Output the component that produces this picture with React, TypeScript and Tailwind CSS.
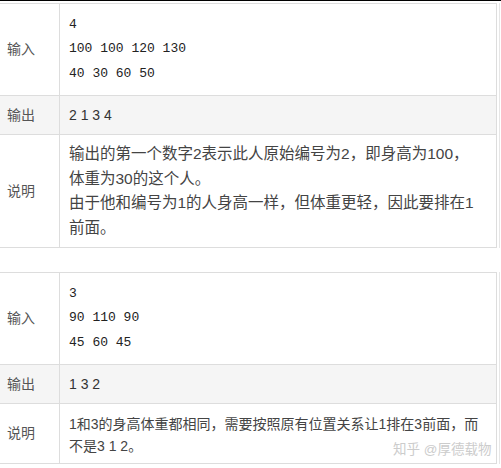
import React from 'react';

type Row = {
  label: string;
  kind: 'input' | 'output' | 'desc';
  lines: string[];
  h: string;
};

const tables: { rows: Row[]; descText: string }[] = [
  {
    descText: 'text-[15.5px] leading-[24.5px]',
    rows: [
      { label: '输入', kind: 'input', lines: ['4', '100 100 120 130', '40 30 60 50'], h: 'h-[92px]' },
      { label: '输出', kind: 'output', lines: ['2 1 3 4'], h: 'h-[39px]' },
      {
        label: '说明',
        kind: 'desc',
        lines: [
          '输出的第一个数字2表示此人原始编号为2，即身高为100，',
          '体重为30的这个人。',
          '由于他和编号为1的人身高一样，但体重更轻，因此要排在1',
          '前面。',
        ],
        h: 'h-[113px]',
      },
    ],
  },
  {
    descText: 'text-[14px] leading-[22px] pt-[2px]',
    rows: [
      { label: '输入', kind: 'input', lines: ['3', '90 110 90', '45 60 45'], h: 'h-[92px]' },
      { label: '输出', kind: 'output', lines: ['1 3 2'], h: 'h-[39px]' },
      {
        label: '说明',
        kind: 'desc',
        lines: ['1和3的身高体重都相同，需要按照原有位置关系让1排在3前面，而', '不是3 1 2。'],
        h: 'h-[60px]',
      },
    ],
  },
];

const sans = { fontFamily: '"Liberation Sans", "Noto Sans CJK SC", sans-serif' };
const mono = { fontFamily: '"Liberation Mono", "Noto Sans CJK SC", monospace' };

function Table({ rows, descText }: { rows: Row[]; descText: string }) {
  return (
    <div className="w-[500px] border-r border-[#e6e6e6]">
      <div className="w-[497px] border-t border-r border-[#dddddd]">
        {rows.map((r) => (
          <div
            key={r.label}
            className={`flex border-b border-[#dddddd] ${r.h} ${r.kind === 'output' ? 'bg-[#f5f5f5]' : 'bg-white'}`}
          >
            <div className="w-[60px] shrink-0 border-r border-[#dddddd] flex items-center pl-[7px] text-[14px] text-[#555]">
              {r.label}
            </div>
            <div
              className={`flex-1 flex flex-col justify-center pl-[9px] ${
                r.kind === 'input'
                  ? 'text-[13px] leading-[24.5px] whitespace-pre text-[#222]'
                  : r.kind === 'output'
                  ? 'text-[14px] leading-[20px] text-[#333]'
                  : `${descText} text-[#444]`
              }`}
              style={r.kind === 'input' ? mono : sans}
            >
              {r.lines.map((l, i) => (
                <div key={i} className="whitespace-nowrap">
                  {l}
                </div>
              ))}
            </div>
          </div>
        ))}
      </div>
    </div>
  );
}

export default function App() {
  return (
    <div className="relative w-[501px] h-[468px] bg-white overflow-hidden" style={sans}>
      <div className="h-px bg-black" />
      <div className="pt-[2px]">
        <Table {...tables[0]} />
      </div>
      <div className="pt-[24px]">
        <Table {...tables[1]} />
      </div>
      {/* watermark */}
      <div className="absolute left-[393px] top-[441px] text-[13.5px] leading-[18px] text-[#cccccc] whitespace-nowrap">
        知乎 @厚德载物
      </div>
    </div>
  );
}
